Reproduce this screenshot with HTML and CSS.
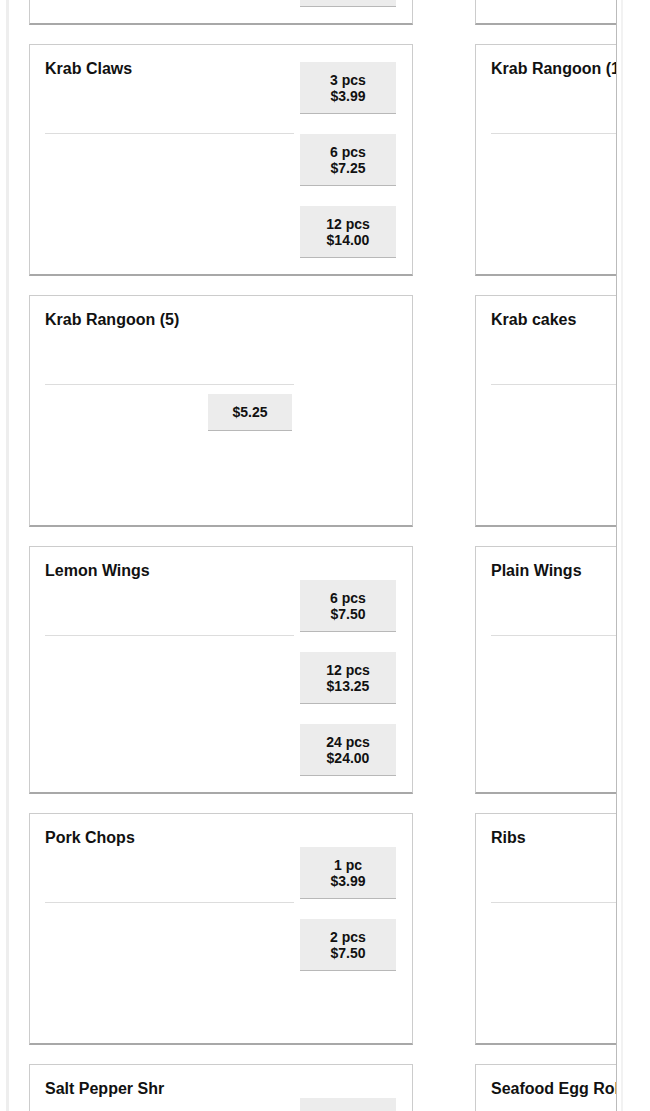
FILE: index.html
```html
<!DOCTYPE html>
<html lang="en">
<head>
    <meta charset="UTF-8">
    <meta name="viewport" content="width=device-width, initial-scale=1.0">
    <title>Menu</title>
    <link rel="stylesheet" href="styles.css">
</head>
<body>
    <div class="page">
        <div class="menu">
            <div class="menu-grid">
                <!-- row 0 (scrolled off) -->
                <div class="item item--tight">
                    <div class="item-main">
                        <div class="item-head"><h3 class="item-name">Hot Wings</h3></div>
                    </div>
                    <div class="item-prices">
                        <button class="price">6 pcs<br>$7.50</button>
                        <button class="price">12 pcs<br>$13.25</button>
                        <button class="price">24 pcs<br>$24.00</button>
                    </div>
                </div>
                <div class="item item--tight">
                    <div class="item-main">
                        <div class="item-head"><h3 class="item-name">Hush Puppies</h3></div>
                    </div>
                    <div class="item-prices">
                        <button class="price">6 pcs<br>$3.00</button>
                        <button class="price">12 pcs<br>$5.50</button>
                    </div>
                </div>

                <div class="item item--tight">
                    <div class="item-main">
                        <div class="item-head"><h3 class="item-name">Krab Claws</h3></div>
                    </div>
                    <div class="item-prices">
                        <button class="price">3 pcs<br>$3.99</button>
                        <button class="price">6 pcs<br>$7.25</button>
                        <button class="price">12 pcs<br>$14.00</button>
                    </div>
                </div>
                <div class="item">
                    <div class="item-main">
                        <div class="item-head"><h3 class="item-name">Krab Rangoon (10)</h3></div>
                        <button class="price price--single">$9.99</button>
                    </div>
                </div>

                <div class="item">
                    <div class="item-main">
                        <div class="item-head"><h3 class="item-name">Krab Rangoon (5)</h3></div>
                        <button class="price price--single">$5.25</button>
                    </div>
                </div>
                <div class="item">
                    <div class="item-main">
                        <div class="item-head"><h3 class="item-name">Krab cakes</h3></div>
                        <button class="price price--single">$4.50</button>
                    </div>
                </div>

                <div class="item">
                    <div class="item-main">
                        <div class="item-head"><h3 class="item-name">Lemon Wings</h3></div>
                    </div>
                    <div class="item-prices">
                        <button class="price">6 pcs<br>$7.50</button>
                        <button class="price">12 pcs<br>$13.25</button>
                        <button class="price">24 pcs<br>$24.00</button>
                    </div>
                </div>
                <div class="item">
                    <div class="item-main">
                        <div class="item-head"><h3 class="item-name">Plain Wings</h3></div>
                    </div>
                    <div class="item-prices">
                        <button class="price">6 pcs<br>$6.99</button>
                        <button class="price">12 pcs<br>$12.50</button>
                        <button class="price">24 pcs<br>$23.00</button>
                    </div>
                </div>

                <div class="item">
                    <div class="item-main">
                        <div class="item-head"><h3 class="item-name">Pork Chops</h3></div>
                    </div>
                    <div class="item-prices">
                        <button class="price">1 pc<br>$3.99</button>
                        <button class="price">2 pcs<br>$7.50</button>
                    </div>
                </div>
                <div class="item">
                    <div class="item-main">
                        <div class="item-head"><h3 class="item-name">Ribs</h3></div>
                    </div>
                    <div class="item-prices">
                        <button class="price">Half<br>$9.99</button>
                        <button class="price">Full<br>$17.99</button>
                    </div>
                </div>

                <div class="item">
                    <div class="item-main">
                        <div class="item-head"><h3 class="item-name">Salt Pepper Shr</h3></div>
                    </div>
                    <div class="item-prices">
                        <button class="price">6 pcs<br>$7.99</button>
                        <button class="price">12 pcs<br>$14.99</button>
                    </div>
                </div>
                <div class="item">
                    <div class="item-main">
                        <div class="item-head"><h3 class="item-name">Seafood Egg Roll</h3></div>
                        <button class="price price--single">$2.50</button>
                    </div>
                </div>
            </div>
        </div>
    </div>
</body>
</html>
```

FILE: styles.css
```css
* {
    box-sizing: border-box;
    margin: 0;
    padding: 0;
}

body {
    background: #fff;
    font-family: "Liberation Sans", Arial, sans-serif;
    color: #111;
}

.page {
    width: 623px;
    height: 1111px;
    border-right: 2px solid #f2f2f2;
}

.menu {
    margin-left: 6px;
    width: 611px;
    height: 1111px;
    overflow: hidden;
    border-left: 3px solid #eeeeee;
    border-right: 1px solid #bbbbbb;
}

.menu-grid {
    display: grid;
    grid-template-columns: 384px 384px;
    column-gap: 62px;
    row-gap: 19px;
    margin-top: -207px;
    padding-left: 20px;
    width: 900px;
}

/* Menu item card */
.item {
    display: flex;
    gap: 6px;
    min-height: 232px;
    padding: 15px 17px 16px 15px;
    background: #fff;
    border: 1px solid #cccccc;
    border-bottom: 2px solid #a8a8a8;
}

.item-main {
    width: 249px;
    flex-shrink: 0;
}

.item-head {
    min-height: 74px;
    border-bottom: 1px solid #dddddd;
}

.item-name {
    font-size: 16px;
    line-height: 18px;
    font-weight: bold;
    white-space: nowrap;
}

.item-prices {
    display: flex;
    flex-direction: column;
    gap: 20px;
    width: 96px;
    margin-top: 18px;
}

.item--tight .item-prices {
    margin-top: 2px;
}

.price {
    display: block;
    width: 96px;
    height: 52px;
    padding: 10px 0 9px;
    background: #ececec;
    border: none;
    border-bottom: 1px solid #b8b8b8;
    font-family: "Liberation Sans", Arial, sans-serif;
    font-size: 14px;
    line-height: 16px;
    font-weight: bold;
    color: #111;
    text-align: center;
    cursor: pointer;
}

.price--single {
    width: 84px;
    height: 37px;
    padding: 0;
    margin: 9px 2px 0 auto;
}
```
